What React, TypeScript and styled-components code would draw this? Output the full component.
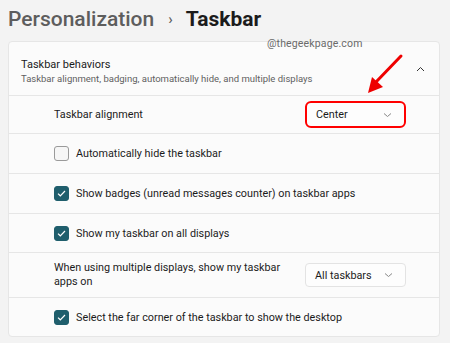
import React from "react";
import styled, { createGlobalStyle } from "styled-components";

const Global = createGlobalStyle`
  html, body { margin: 0; padding: 0; background: #f3f3f3; }
  body { font-family: Roboto, "Noto Sans", sans-serif; color: #1b1b1b; }
`;

const Page = styled.div`
  position: relative;
  width: 450px;
  height: 343px;
  overflow: hidden;
  background: #f3f3f3;
  padding: 0 10px 0 8px;
  box-sizing: border-box;
`;

const Title = styled.div`
  display: flex;
  align-items: center;
  height: 41px;
  font-size: 21px;
  padding-bottom: 4px;
  box-sizing: border-box;
`;

const Crumb = styled.span`
  color: #5d5d5d;
  font-weight: 500;
`;

const Sep = styled.span`
  color: #5d5d5d;
  font-size: 15px;
  margin: 0 13px 0 14px;
  font-weight: 500;
`;

const Current = styled.span`
  color: #1b1b1b;
  font-weight: 700;
`;

const Card = styled.div`
  background: #fbfbfb;
  border: 1px solid #e6e6e6;
  border-radius: 4px;
  display: flex;
  flex-direction: column;
`;

const Header = styled.div`
  height: 54px;
  display: flex;
  align-items: center;
  justify-content: space-between;
  padding: 0 14px 0 12px;
  box-sizing: border-box;
  border-bottom: 1px solid #e6e6e6;
`;

const HeaderText = styled.div`
  display: flex;
  flex-direction: column;
  gap: 2px;
  padding-top: 4px;
`;

const HeaderTitle = styled.div`
  font-size: 11px;
  color: #1b1b1b;
`;

const HeaderSub = styled.div`
  font-size: 9.5px;
  color: #5f5f5f;
`;

const Row = styled.div<{ $h: number; $last?: boolean }>`
  height: ${(p) => p.$h}px;
  display: flex;
  align-items: center;
  justify-content: space-between;
  padding: 0 33px 0 45px;
  box-sizing: border-box;
  border-bottom: ${(p) => (p.$last ? "none" : "1px solid #e6e6e6")};
`;

const Label = styled.div`
  font-size: 10.8px;
  color: #1b1b1b;
  line-height: 14px;
  max-width: 235px;
`;

const CheckRow = styled.label`
  display: flex;
  align-items: center;
  gap: 7px;
  font-size: 10.8px;
  color: #1b1b1b;
`;

const Box = styled.span<{ $on: boolean }>`
  width: 15px;
  height: 15px;
  border-radius: 3px;
  box-sizing: border-box;
  display: flex;
  align-items: center;
  justify-content: center;
  background: ${(p) => (p.$on ? "#1f5e6c" : "#f6f6f6")};
  border: 1px solid ${(p) => (p.$on ? "#1f5e6c" : "#9a9a9a")};
`;

const Select = styled.div<{ $hl?: boolean }>`
  width: 101px;
  height: ${(p) => (p.$hl ? 27 : 24)}px;
  box-sizing: border-box;
  display: flex;
  align-items: center;
  justify-content: space-between;
  padding: 0 12px 0 9px;
  background: #fdfdfd;
  border: ${(p) => (p.$hl ? "2.5px solid #ff0000" : "1px solid #e3e3e3")};
  border-radius: ${(p) => (p.$hl ? 6 : 4)}px;
  font-size: 10.8px;
  color: #1b1b1b;
`;

const Watermark = styled.div`
  position: absolute;
  left: 267px;
  top: 37px;
  font-size: 10.5px;
  color: #6a6a6a;
  letter-spacing: 0.15px;
`;

const ArrowSvg = styled.svg`
  position: absolute;
  left: 360px;
  top: 50px;
`;

const Chevron = ({ up }: { up?: boolean }) => (
  <svg width="9" height="6" viewBox="0 0 9 6">
    <path
      d={up ? "M1 5 L4.5 1.5 L8 5" : "M1 1.5 L4.5 4.5 L8 1.5"}
      fill="none"
      stroke={up ? "#333" : "#888"}
      strokeWidth="1"
    />
  </svg>
);

const Check = ({ on }: { on: boolean }) => (
  <Box $on={on}>
    {on && (
      <svg width="9" height="7" viewBox="0 0 9 7">
        <path d="M1 3.6 L3.3 5.8 L8 1" fill="none" stroke="#fff" strokeWidth="1.2" />
      </svg>
    )}
  </Box>
);

export default function App() {
  return (
    <Page>
      <Global />
      <Title>
        <Crumb>Personalization</Crumb>
        <Sep>›</Sep>
        <Current>Taskbar</Current>
      </Title>
      <Card>
        <Header>
          <HeaderText>
            <HeaderTitle>Taskbar behaviors</HeaderTitle>
            <HeaderSub>Taskbar alignment, badging, automatically hide, and multiple displays</HeaderSub>
          </HeaderText>
          <Chevron up />
        </Header>
        <Row $h={38}>
          <Label>Taskbar alignment</Label>
          <Select $hl>
            Center
            <Chevron />
          </Select>
        </Row>
        <Row $h={40}>
          <CheckRow>
            <Check on={false} />
            Automatically hide the taskbar
          </CheckRow>
        </Row>
        <Row $h={40}>
          <CheckRow>
            <Check on />
            Show badges (unread messages counter) on taskbar apps
          </CheckRow>
        </Row>
        <Row $h={39}>
          <CheckRow>
            <Check on />
            Show my taskbar on all displays
          </CheckRow>
        </Row>
        <Row $h={45}>
          <Label>When using multiple displays, show my taskbar apps on</Label>
          <Select>
            All taskbars
            <Chevron />
          </Select>
        </Row>
        <Row $h={38} $last>
          <CheckRow>
            <Check on />
            Select the far corner of the taskbar to show the desktop
          </CheckRow>
        </Row>
      </Card>
      <Watermark>@thegeekpage.com</Watermark>
      <ArrowSvg width="50" height="50" viewBox="0 0 50 50">
        <path d="M41 6 L16 32" stroke="#ee0000" strokeWidth="3" strokeLinecap="round" />
        <path d="M8 43 L12 27 L23 37 Z" fill="#ee0000" />
      </ArrowSvg>
    </Page>
  );
}
